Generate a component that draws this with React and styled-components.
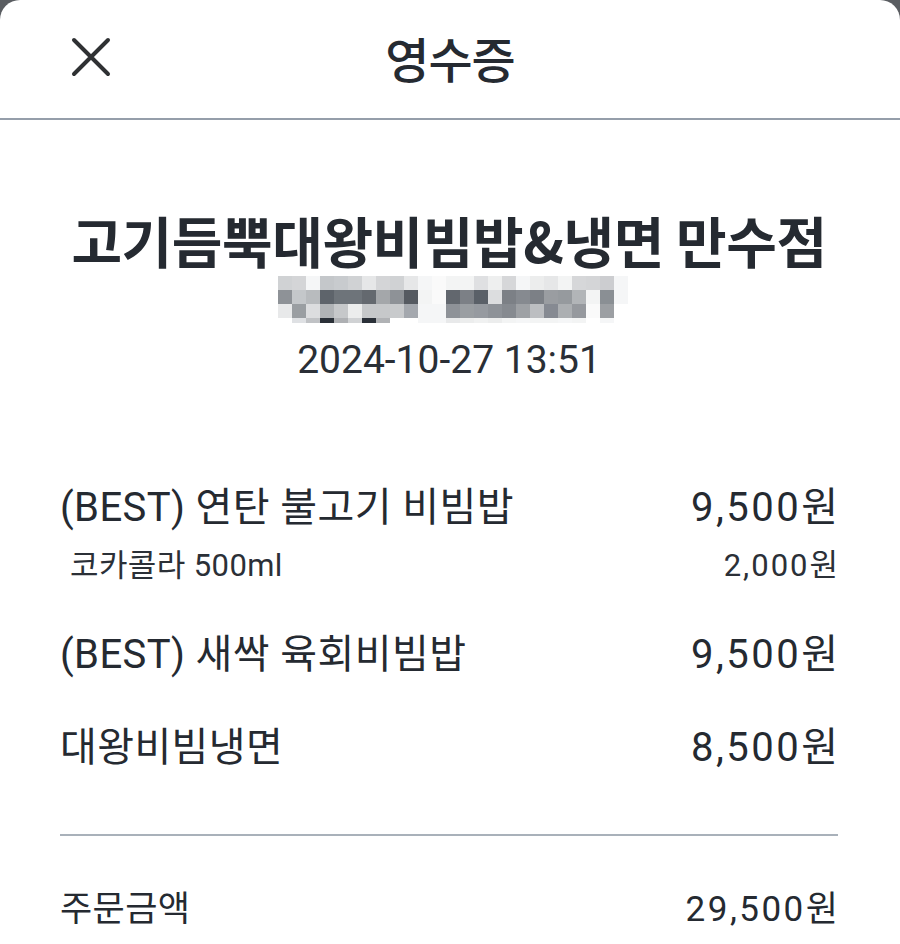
import styled, { createGlobalStyle } from "styled-components";

const GlobalStyle = createGlobalStyle`
  html, body {
    margin: 0;
    padding: 0;
    background: #5a5d61;
  }
  * { box-sizing: border-box; }
`;

const Sheet = styled.div`
  background: #fff;
  min-height: 944px;
  border-radius: 20px 20px 0 0;
  font-family: Roboto, "Noto Sans CJK KR", sans-serif;
  color: #252a31;
`;

const Header = styled.header`
  height: 120px;
  display: grid;
  grid-template-columns: 1fr auto 1fr;
  align-items: center;
  border-bottom: 2px solid #959eaa;
  padding: 0 68px 4px;
`;

const CloseButton = styled.button`
  justify-self: start;
  width: 46px;
  height: 46px;
  padding: 0;
  border: none;
  background: none;
  display: flex;
  align-items: center;
  justify-content: center;
  color: #2f3133;
`;

const HeaderTitle = styled.h1`
  margin: 0;
  font-family: "Noto Sans CJK KR", sans-serif;
  font-size: 48px;
  line-height: 56px;
  font-weight: 500;
  letter-spacing: -1px;
`;

const Body = styled.main`
  padding: 0 62px 0 60px;
`;

const StoreBlock = styled.section`
  display: flex;
  flex-direction: column;
  align-items: center;
  padding-top: 88px;
`;

const StoreName = styled.h2`
  margin: 0;
  font-family: "Noto Sans CJK KR", sans-serif;
  font-size: 55px;
  line-height: 62px;
  font-weight: 700;
  letter-spacing: -0.4px;
  white-space: nowrap;
`;

const Mosaic = styled.div`
  margin-top: 6px;
  display: grid;
  grid-template-columns: repeat(25, 14px);
  grid-template-rows: 14px 14px 14px 5px;
  margin-left: 8px;
`;

const Cell = styled.span`
  background: ${(p) => p.$c};
`;

const DateText = styled.div`
  margin-top: 15px;
  font-size: 39px;
  line-height: 44px;
  color: #2a2f36;
`;

const ItemList = styled.section`
  margin-top: 104px;
  display: flex;
  flex-direction: column;
  gap: 49px;
`;

const ItemGroup = styled.div`
  display: flex;
  flex-direction: column;
  gap: ${(p) => (p.$hasOption ? "18px" : "0")};
`;

const Row = styled.div`
  display: flex;
  justify-content: space-between;
  align-items: center;
  font-size: ${(p) => (p.$small ? "31px" : "40px")};
  line-height: ${(p) => (p.$small ? "36px" : "44px")};
  padding-left: ${(p) => (p.$small ? "10px" : "0")};
  color: ${(p) => (p.$small ? "#2b3037" : "#252a31")};
`;

const Name = styled.span`
  white-space: nowrap;
  letter-spacing: 0.4px;
`;

const Price = styled.span`
  white-space: nowrap;
  letter-spacing: ${(p) => p.$spacing || "2.5px"};
  margin-right: -${(p) => p.$spacing || "2.5px"};
`;

const Divider = styled.hr`
  margin: 64px 0 0;
  border: none;
  height: 2px;
  background: #a9b1ba;
`;

const TotalRow = styled(Row)`
  margin-top: 52px;
  font-size: 35px;
`;

const mosaicRows = [
  ["#d0d2d4", "#d4d5d7", "#f5f6f7", "#c4c7ca", "#c8cbce", "#d0d2d4", "#e6e7e8", "#d4d5d7", "#d0d2d4", "#e6e7e8", "#f5f6f7", "#fafafa", "#f3f4f4", "#f3f4f4", "#dfe0e2", "#eeefef", "#d6d7d9", "#f5f6f7", "#eceded", "#e6e7e8", "#f3f4f4", "#d6d7d9", "#d4d5d7", "#cccdd0", "#f5f6f7"],
  ["#8e9297", "#c4c7ca", "#b8bbbe", "#5e646b", "#6e747a", "#6e747a", "#64696f", "#a4a7aa", "#8e9297", "#555a61", "#f3f4f4", "#fafafa", "#62676e", "#7c8086", "#5a6068", "#dcdddf", "#7c8086", "#868a90", "#7c8086", "#9a9da1", "#969a9e", "#b2b5b8", "#f3f4f4", "#8a8f94", "#f5f6f7"],
  ["#e8e9ea", "#9a9ea2", "#dcdddf", "#b0b3b6", "#c6c8ca", "#eceded", "#c6c8ca", "#c6c8ca", "#c8cacc", "#a4a8ae", "#f5f6f7", "#f5f6f7", "#8e9298", "#9a9ea2", "#969aa0", "#8e9298", "#868a90", "#9ea1a5", "#bcbec1", "#868a92", "#acafb2", "#96999e", "#fafafa", "#9c9fa3", "#ffffff"],
  ["#ffffff", "#dfe1e4", "#c0c2c5", "#2a3038", "#aeb0b3", "#d0d2d4", "#2a3038", "#b0b2b5", "#ffffff", "#ffffff", "#f5f6f7", "#f5f6f7", "#e8e9ea", "#eceded", "#f0f1f1", "#eceded", "#f3f4f4", "#f5f6f7", "#f3f4f4", "#f3f4f4", "#f5f6f7", "#f3f4f4", "#ffffff", "#f5f6f7", "#ffffff"],
];

const items = [
  { name: "(BEST) 연탄 불고기 비빔밥", price: "9,500원", option: { name: "코카콜라 500ml", price: "2,000원" } },
  { name: "(BEST) 새싹 육회비빔밥", price: "9,500원" },
  { name: "대왕비빔냉면", price: "8,500원" },
];

const CloseIcon = () => (
  <svg width="40" height="40" viewBox="0 0 40 40" fill="none" stroke="currentColor" strokeWidth="4" strokeLinecap="round">
    <path d="M3 3 L37 37 M37 3 L3 37" />
  </svg>
);

export default function App() {
  return (
    <>
      <GlobalStyle />
      <Sheet>
        <Header>
          <CloseButton aria-label="닫기">
            <CloseIcon />
          </CloseButton>
          <HeaderTitle>영수증</HeaderTitle>
          <span />
        </Header>
        <Body>
          <StoreBlock>
            <StoreName>고기듬뿍대왕비빔밥&amp;냉면 만수점</StoreName>
            <Mosaic aria-hidden="true">
              {mosaicRows.flatMap((row, r) =>
                row.map((c, i) => <Cell key={`${r}-${i}`} $c={c} />)
              )}
            </Mosaic>
            <DateText>2024-10-27 13:51</DateText>
          </StoreBlock>
          <ItemList>
            {items.map((item) => (
              <ItemGroup key={item.name} $hasOption={!!item.option}>
                <Row>
                  <Name>{item.name}</Name>
                  <Price>{item.price}</Price>
                </Row>
                {item.option && (
                  <Row $small>
                    <Name>{item.option.name}</Name>
                    <Price $spacing="2px">{item.option.price}</Price>
                  </Row>
                )}
              </ItemGroup>
            ))}
          </ItemList>
          <Divider />
          <TotalRow>
            <Name>주문금액</Name>
            <Price $spacing="2.5px">29,500원</Price>
          </TotalRow>
        </Body>
      </Sheet>
    </>
  );
}
